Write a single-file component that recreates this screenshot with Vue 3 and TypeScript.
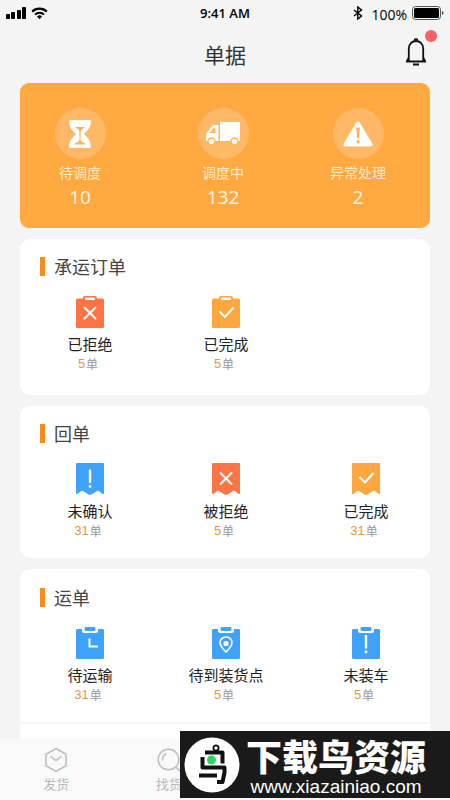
<script setup lang="ts">
type Shape = 'clip' | 'receipt' | 'board'
type Mark = 'cross' | 'check' | 'alert' | 'clock' | 'pin'

interface Entry {
  label: string
  count: number
  shape: Shape
  mark: Mark
  color: string
}

interface Section {
  title: string
  kind: string
  entries: Entry[]
}

interface Stat {
  label: string
  value: number
  icon: 'hourglass' | 'truck' | 'warning'
}

const RED = '#fd7544'
const AMBER = '#fda73e'
const BLUE = '#3fa3fb'

const stats: Stat[] = [
  { label: '待调度', value: 10, icon: 'hourglass' },
  { label: '调度中', value: 132, icon: 'truck' },
  { label: '异常处理', value: 2, icon: 'warning' },
]

const sections: Section[] = [
  {
    title: '承运订单',
    kind: 'orders',
    entries: [
      { label: '已拒绝', count: 5, shape: 'clip', mark: 'cross', color: RED },
      { label: '已完成', count: 5, shape: 'clip', mark: 'check', color: AMBER },
    ],
  },
  {
    title: '回单',
    kind: 'receipts',
    entries: [
      { label: '未确认', count: 31, shape: 'receipt', mark: 'alert', color: BLUE },
      { label: '被拒绝', count: 5, shape: 'receipt', mark: 'cross', color: RED },
      { label: '已完成', count: 31, shape: 'receipt', mark: 'check', color: AMBER },
    ],
  },
  {
    title: '运单',
    kind: 'waybills',
    entries: [
      { label: '待运输', count: 31, shape: 'board', mark: 'clock', color: BLUE },
      { label: '待到装货点', count: 5, shape: 'board', mark: 'pin', color: BLUE },
      { label: '未装车', count: 5, shape: 'board', mark: 'alert', color: BLUE },
    ],
  },
]
</script>

<template>
  <div class="page">
    <div class="status">
      <div class="status-left">
        <svg width="20" height="13" viewBox="0 0 20 13">
          <rect x="0" y="7" width="4" height="5" rx="1" />
          <rect x="5" y="5" width="4" height="7" rx="1" />
          <rect x="11" y="3" width="4" height="9" rx="1" />
          <rect x="16" y="0" width="4" height="12" rx="1" />
        </svg>
        <svg width="17" height="13" viewBox="0 0 17 13">
          <path d="M1.2 4.6a10.4 10.4 0 0 1 14.6 0" fill="none" stroke="#000" stroke-width="2.2" />
          <path d="M4 7.6a6.4 6.4 0 0 1 9 0" fill="none" stroke="#000" stroke-width="2" />
          <path d="M5.9 9.6a3.7 3.7 0 0 1 5.2 0L8.500 12.300z" />
        </svg>
      </div>
      <span class="time">9:41 AM</span>
      <div class="status-right">
        <svg width="10" height="14" viewBox="0 0 10 14">
          <path d="M1 4l7.500 6L4.800 13V1l3.700 3L1 10" fill="none" stroke="#000" stroke-width="1.400" />
        </svg>
        <span class="percent">100%</span>
        <svg width="32" height="14" viewBox="0 0 32 14">
          <rect x="0.500" y="0.500" width="28" height="13" rx="3" fill="none" stroke="#555" />
          <rect x="2" y="2" width="25" height="10" rx="1.500" />
          <path d="M30 5v4q1.500-.6 1.500-2T30 5z" fill="#444" />
        </svg>
      </div>
    </div>

    <header class="header">
      <h1>单据</h1>
      <button class="bell" type="button" aria-label="通知">
        <svg width="22" height="28" viewBox="0 0 22 28">
          <path d="M9 1.500h4M1 23.500h20M8 26.500h6" stroke="#111" stroke-width="2" />
          <path d="M3.800 23V10.500a7.200 7.500 0 0 1 14.400 0V23M4 19l-2 4M18 19l2 4" fill="none" stroke="#111" stroke-width="1.800" />
        </svg>
        <span class="dot"></span>
      </button>
    </header>

    <main class="content">
      <section class="hero">
        <a v-for="s in stats" :key="s.label" class="stat" href="#">
          <span class="disc">
            <svg v-if="s.icon === 'hourglass'" width="24" height="30" viewBox="0 0 24 30">
              <path d="M2 1h20q1 0 1 1.500c-.4 5.500-3 9-7.200 12.500 4.200 3.500 6.800 7 7.200 12.500q0 1.500-1 1.500H2q-1 0-1-1.500C1.400 22 4 18.500 8.200 15 4 11.500 1.400 8 1 2.500Q1 1 2 1z" fill="#fff" />
              <path d="M7.500 8.500h9M9 9q3 1 3 5 0-4 3-5M12 13v9M12 21.500q-1.500 2.500-5 3.500h10q-3.500-1-5-3.500z" fill="#ffb35a" stroke="#ffb35a" stroke-width="1.200" />
            </svg>
            <svg v-else-if="s.icon === 'truck'" width="36" height="26" viewBox="0 0 36 26">
              <path d="M15 1h20v19H15zM13.500 4H9.500q-1.500 0-2.500 1.200L2 11.500q-1 1.200-1 2.500v6h12.500z" fill="#fff" />
              <path d="M10.500 7v5H4.500l4-5z" fill="#ffb966" />
              <circle cx="6.500" cy="20.500" r="3.500" fill="#fff" stroke="#ffb35a" stroke-width="1.500" />
              <circle cx="29.500" cy="20.500" r="3.500" fill="#fff" stroke="#ffb35a" stroke-width="1.500" />
            </svg>
            <svg v-else width="30" height="26" viewBox="0 0 30 26">
              <path d="M15 2.500L27.500 23.500h-25z" fill="#fff" stroke="#fff" stroke-width="4" stroke-linejoin="round" />
              <path d="M13.200 6.500h3.600l-1 11h-1.600z" fill="#ffb053" />
              <circle cx="15" cy="20.800" r="1.600" fill="#ffb053" />
            </svg>
          </span>
          <span class="stat-label">{{ s.label }}</span>
          <strong class="stat-value">{{ s.value }}</strong>
        </a>
      </section>

      <section v-for="sec in sections" :key="sec.kind" class="card" :class="sec.kind">
        <h2>{{ sec.title }}</h2>
        <div class="entries">
          <a v-for="e in sec.entries" :key="e.label" class="entry" href="#">
            <svg width="30" height="34" viewBox="0 0 30 34">
              <g v-if="e.shape === 'clip'" :fill="e.color">
                <path fill-rule="evenodd" d="M2.500 3.500H8V3q0-2 2-2h10q2 0 2 2v.5h5.500q1.500 0 1.500 1.500v26.500q0 1.500-1.500 1.500h-25Q1 33 1 31.500V5q0-1.500 1.500-1.500zM11 2.500q-1 0-1 1.200t1 1.300h8q1 0 1-1.300t-1-1.200z" />
              </g>
              <path
                v-else-if="e.shape === 'receipt'"
                :fill="e.color"
                d="M2 1h26q1 0 1 1v30q-1.500 0-2.500-.8l-2.600-2.200q-.9-.6-1.800 0l-5.600 3.600q-1.500.9-3 0L7.900 29q-.9-.6-1.800 0l-2.600 2.200Q2.500 32 1 32V2q0-1 1-1z"
              />
              <g v-else :fill="e.color">
                <path d="M2.500 3H7v1.500q0 2.500 2.500 2.500h11Q23 7 23 4.500V3h4.500Q29 3 29 4.500v27q0 1.500-1.500 1.500h-25Q1 33 1 31.500v-27Q1 3 2.500 3z" />
                <rect x="9.500" y="1" width="11" height="4" rx="1.500" />
              </g>
              <g
                :transform="e.shape === 'receipt' ? 'translate(0 -1.500)' : undefined"
                fill="none"
                stroke="#fff"
                stroke-width="2"
                stroke-linecap="round"
              >
                <path v-if="e.mark === 'cross'" d="M9.500 12.500l11 11M20.500 12.500l-11 11" />
                <path v-else-if="e.mark === 'check'" d="M8.500 16.500l5.500 5.500 8.500-9.500" stroke-width="2.200" stroke-linecap="butt" />
                <g v-else-if="e.mark === 'alert'">
                  <path d="M15 10v11.500" stroke-width="2.400" />
                  <path d="M15 26v.1" stroke-width="2.800" />
                </g>
                <path v-else-if="e.mark === 'clock'" d="M14.500 12.500v8h8.500" stroke-linecap="butt" />
                <g v-else>
                  <path d="M15 26q-6-5.800-6-9.500a6 5.500 0 0 1 12 0q0 3.700-6 9.500z" stroke-width="1.600" />
                  <circle cx="15" cy="17.500" r="2.600" fill="#fff" stroke="none" />
                </g>
              </g>
            </svg>
            <span class="entry-label">{{ e.label }}</span>
            <span class="entry-count"><b>{{ e.count }}</b>单</span>
          </a>
        </div>
      </section>
    </main>

    <nav class="tabs">
      <a class="tab" href="#">
        <svg width="24" height="26" viewBox="0 0 24 26">
          <path d="M12 1.500l10 5.800v11.400l-10 5.800-10-5.800V7.300zM6.500 9.500l5.500 4 5.500-4" />
        </svg>
        <span>发货</span>
      </a>
      <a class="tab" href="#">
        <svg width="24" height="26" viewBox="0 0 24 26">
          <circle cx="11.500" cy="12.500" r="10.300" />
          <path d="M19 20l4.500 4.500M5.500 13.500q-.3-5 4-7" />
        </svg>
        <span>找货</span>
      </a>
    </nav>

    <aside class="banner">
      <svg width="56" height="56" viewBox="0 0 56 56">
        <circle cx="28" cy="28" r="27.500" fill="#fff" />
        <circle cx="32" cy="11" r="2.600" fill="none" stroke="#111" stroke-width="1.800" />
        <path d="M21 15.500h17.500v11" fill="none" stroke="#111" stroke-width="4" stroke-linejoin="round" />
        <path d="M18.500 20v10.500h22v5l-2 9.500h-5.500M15 38.500h18" fill="none" stroke="#111" stroke-width="4" stroke-linejoin="round" />
        <circle cx="27.500" cy="23" r="4.500" fill="#2ed45e" />
      </svg>
      <div class="banner-text">
        <strong>下载鸟资源</strong>
        <span>www.xiazainiao.com</span>
      </div>
    </aside>
  </div>
</template>

<style>
body {
  margin: 0;
  background: #f4f4f4;
}
</style>

<style scoped>
.page {
  position: relative;
  display: flex;
  flex-direction: column;
  height: 100vh;
  overflow: hidden;
  background: #f4f4f4;
  color: #333;
  font-family: "Noto Sans CJK SC", sans-serif;
}
a {
  color: inherit;
  text-decoration: none;
}
svg {
  display: block;
  flex: none;
}
.status {
  display: grid;
  grid-template-columns: 1fr auto 1fr;
  align-items: center;
  height: 26px;
  padding: 0 6px;
  color: #000;
  font-family: "Open Sans", sans-serif;
  flex: none;
}
.status-left,
.status-right {
  display: flex;
  align-items: center;
  gap: 5px;
}
.status-right {
  justify-content: flex-end;
}
.time {
  font-size: 13px;
  font-weight: 600;
}
.percent {
  margin-left: 3px;
  padding-top: 3px;
  font-size: 14px;
  line-height: 20px;
}
.header {
  display: grid;
  grid-template-columns: 1fr auto 1fr;
  align-items: center;
  height: 55px;
  padding: 0 23px 2px;
  flex: none;
}
h1 {
  grid-column: 2;
  margin: 0;
  font-size: 21px;
  font-weight: 400;
  line-height: 30px;
}
.bell {
  position: relative;
  justify-self: end;
  margin-bottom: 4px;
  padding: 0;
  border: 0;
  background: none;
}
.dot {
  position: absolute;
  top: -8px;
  right: -10px;
  width: 12px;
  height: 12px;
  border-radius: 50%;
  background: #fc6062;
}
.content {
  display: flex;
  flex: 1;
  flex-direction: column;
  gap: 11px;
  min-height: 0;
  padding: 0 20px;
  overflow: hidden;
}
.hero {
  display: grid;
  grid-template-columns: 143fr 135fr 58px;
  padding: 25px 43px 17px 31px;
  border-radius: 9px;
  background: #ffa940;
  color: #fff;
  flex: none;
}
.stat {
  display: flex;
  flex-direction: column;
  align-items: center;
  width: 58px;
}
.disc {
  display: flex;
  align-items: center;
  justify-content: center;
  width: 51px;
  height: 51px;
  margin-bottom: 3px;
  border-radius: 50%;
  background: #ffb966;
}
.stat-label {
  color: #ffeacb;
  font-size: 14px;
  line-height: 20px;
  white-space: nowrap;
}
.stat-value {
  margin-top: 1px;
  font-family: "Open Sans", sans-serif;
  font-size: 19px;
  font-weight: 400;
  line-height: 28px;
  color: #fff8e8;
}
.card {
  padding-top: 13px;
  border-radius: 10px;
  background: #fff;
  flex: none;
}
.orders {
  padding-bottom: 23px;
}
.receipts {
  padding-bottom: 19px;
}
.waybills {
  flex: 1 0 auto;
  padding-top: 14px;
  border-radius: 10px 10px 0 0;
}
.waybills .entries {
  padding-bottom: 19px;
  border-bottom: 2px solid #f5f5f5;
}
h2 {
  display: flex;
  align-items: center;
  gap: 9px;
  margin: 0 0 15px;
  padding-left: 20px;
  color: #444;
  font-size: 18px;
  font-weight: 400;
  line-height: 28px;
}
h2::before {
  width: 5px;
  height: 19px;
  background: #f98a1c;
  content: "";
}
.entries {
  display: grid;
  grid-template-columns: 34fr 35fr 46px;
  padding: 0 41px 0 47px;
}
.entry {
  display: flex;
  flex-direction: column;
  align-items: center;
  width: 46px;
}
.entry-label {
  margin-top: 3px;
  color: #222;
  font-size: 15px;
  line-height: 24px;
  white-space: nowrap;
}
.entry-count {
  display: flex;
  align-items: center;
  gap: 1px;
  height: 16px;
  margin-right: 4px;
  color: #999;
  font-size: 12px;
  line-height: 16px;
}
.entry-count b {
  color: #f0943a;
  font-family: "Liberation Sans", sans-serif;
  font-size: 13px;
  font-weight: 400;
}
.tabs {
  display: grid;
  grid-template-columns: repeat(4, 1fr);
  height: 61px;
  background: #f9f9f9;
  color: #b8b8b8;
  flex: none;
}
.tab {
  display: flex;
  flex-direction: column;
  align-items: center;
  padding-top: 8px;
  font-size: 13px;
  line-height: 22px;
}
.tab svg {
  fill: none;
  stroke: #bdbdbd;
  stroke-width: 1.5;
}
.banner {
  position: absolute;
  right: 0;
  bottom: 2px;
  display: flex;
  align-items: center;
  gap: 6px;
  box-sizing: border-box;
  width: 270px;
  height: 67px;
  padding-left: 4px;
  background: #1a1a1a;
  color: #fff;
}
.banner-text {
  display: flex;
  flex-direction: column;
  align-items: center;
  align-self: flex-end;
  white-space: nowrap;
}
.banner-text strong {
  margin-bottom: 3px;
  font-size: 36px;
  font-weight: 900;
  line-height: 36px;
}
.banner-text span {
  font-family: "Liberation Sans", sans-serif;
  font-size: 19px;
  line-height: 22px;
}
</style>
